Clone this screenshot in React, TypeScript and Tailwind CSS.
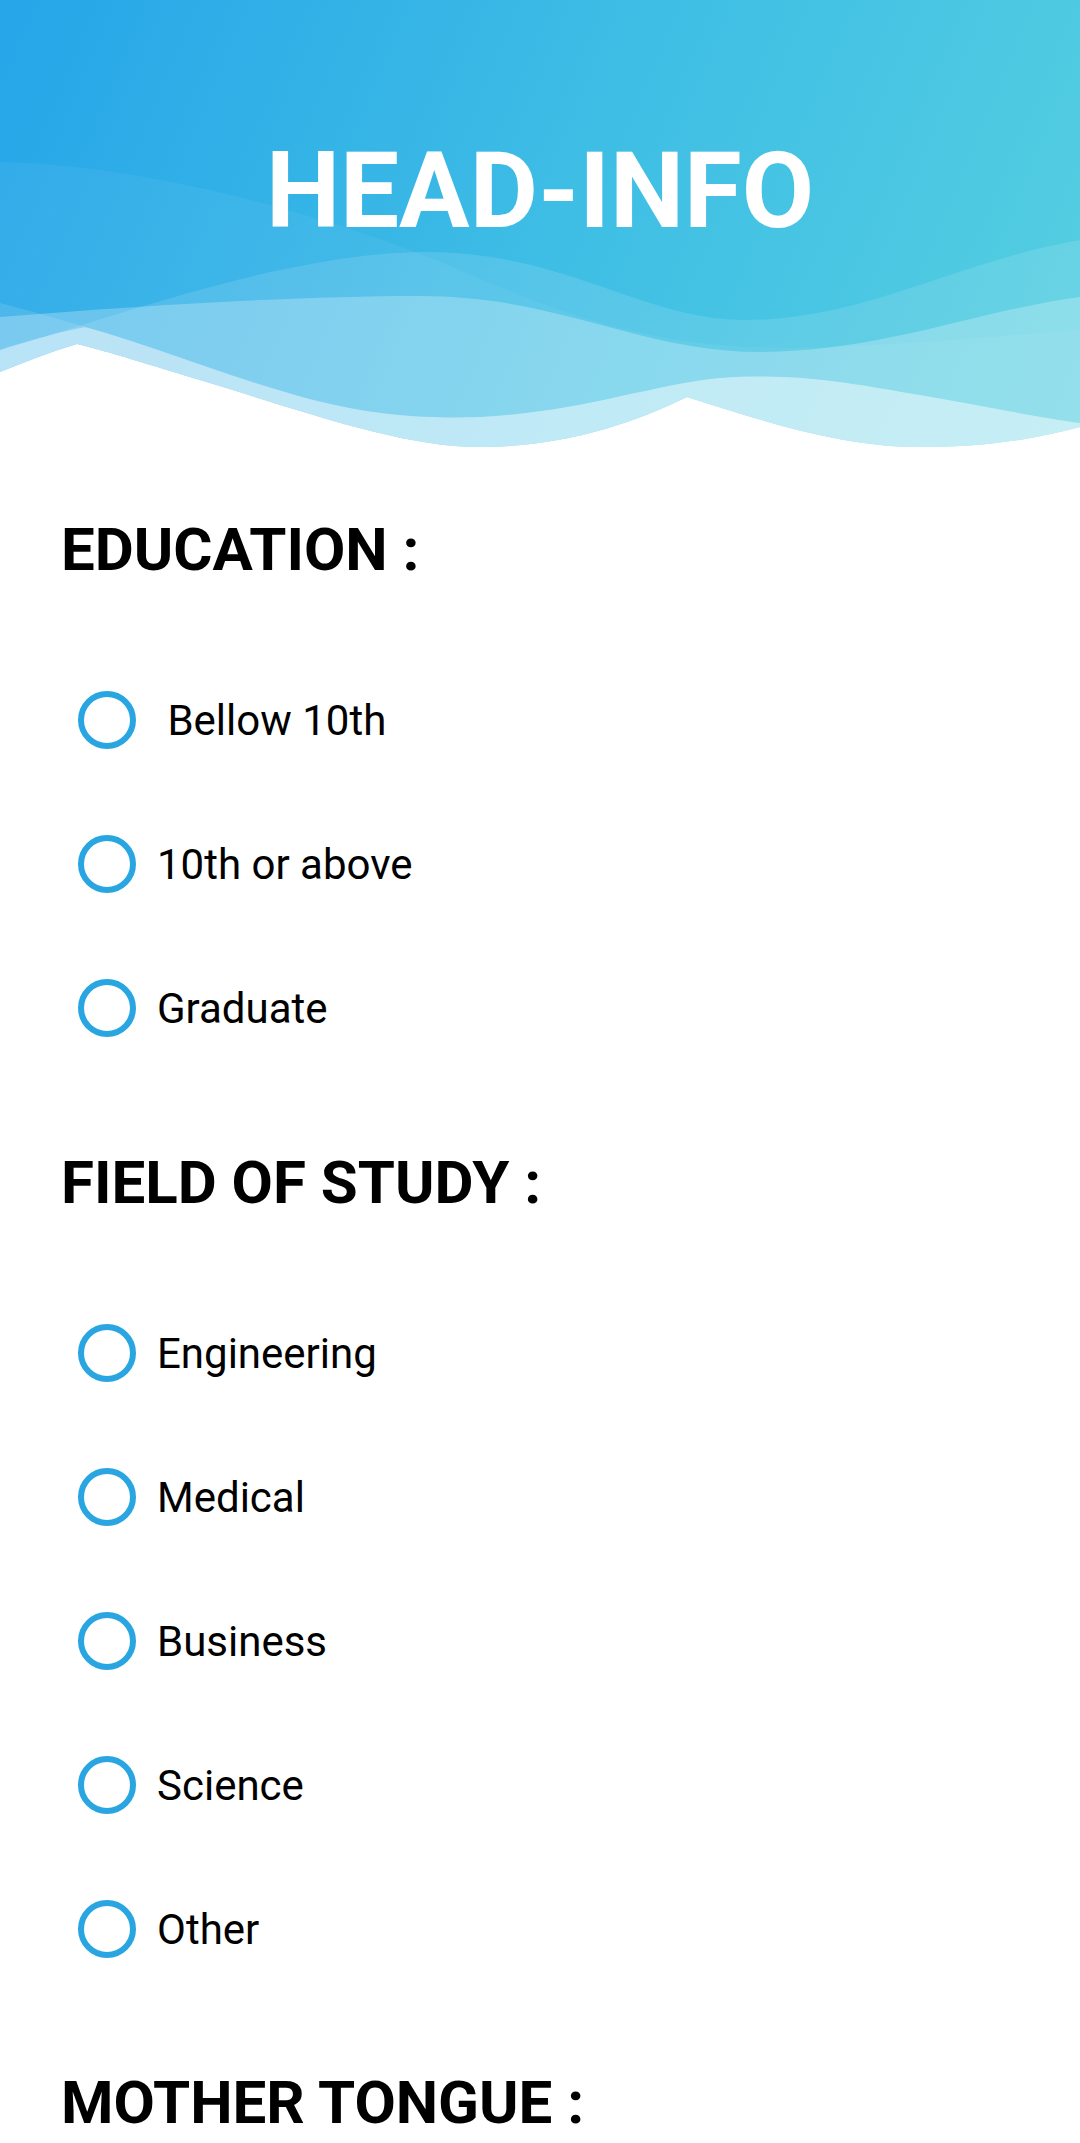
import React from "react";

const education = [" Bellow 10th", "10th or above", "Graduate"];
const fields = ["Engineering", "Medical", "Business", "Science", "Other"];

// lower edge of the light ribbons, shared by two layers after the crossing
const tail =
  "C170,350 270,395 360,410 C410,418 450,418 480,417 C580,412 650,385 720,378 C800,372 860,385 920,395 C980,405 1040,418 1080,423 V460 H0 Z";

const Waves = () => (
  <svg
    className="absolute inset-0"
    width="1080"
    height="460"
    viewBox="0 0 1080 460"
    preserveAspectRatio="none"
  >
    <defs>
      <linearGradient id="hdr" x1="0" y1="0" x2="1080" y2="450" gradientUnits="userSpaceOnUse">
        <stop offset="0" stopColor="#26a5e9" />
        <stop offset="0.55" stopColor="#40bfe5" />
        <stop offset="1" stopColor="#55cfe0" />
      </linearGradient>
      <clipPath id="shape">
        <path d="M0,0 H1080 V427 C1030,440 985,447 920,447 C840,447 760,420 687,397 C630,425 560,447 480,447 C400,447 300,410 200,380 C150,365 110,352 77,344 C50,352 25,362 0,372 Z" />
      </clipPath>
    </defs>
    <g clipPath="url(#shape)">
      <rect x="0" y="0" width="1080" height="460" fill="url(#hdr)" />
      <path
        d="M0,162 C150,165 330,215 460,270 C560,315 640,338 720,345 C800,352 900,345 1080,330 V460 H0 Z"
        fill="#ffffff"
        fillOpacity="0.05"
      />
      <path
        d="M0,350 C120,315 280,255 420,252 C560,250 640,318 740,320 C860,322 960,260 1080,240 V460 H0 Z"
        fill="#ffffff"
        fillOpacity="0.12"
      />
      <path d={"M0,303 C30,311 60,319 85,327 " + tail} fill="#ffffff" fillOpacity="0.12" />
      <path
        d="M0,317 C150,305 300,296 420,296 C560,296 640,352 760,352 C880,352 980,310 1080,297 V460 H0 Z"
        fill="#ffffff"
        fillOpacity="0.25"
      />
      <path d={"M0,350 C30,340 60,332 85,327 " + tail} fill="#ffffff" fillOpacity="0.4" />
    </g>
  </svg>
);

const Radio = ({ label }: { label: string }) => (
  <label className="flex h-[144px] items-center pl-[78px]">
    <span className="h-[58px] w-[58px] shrink-0 rounded-full border-[6px] border-[#29a5e2]" />
    <span className="ml-[21px] whitespace-pre text-[42px] text-black">{label}</span>
  </label>
);

const Heading = ({ children }: { children: React.ReactNode }) => (
  <h2 className="pl-[61px] text-[60px] font-bold leading-none text-black">{children}</h2>
);

export default function App() {
  return (
    <div className="min-h-[2143px] w-[1080px] bg-white font-['Roboto',sans-serif]">
      <header className="relative h-[460px] overflow-hidden">
        <Waves />
        <h1 className="relative pt-[139px] text-center text-[105px] font-bold leading-none text-white">
          HEAD-INFO
        </h1>
      </header>

      <section className="mt-[60px]">
        <Heading>EDUCATION :</Heading>
        <div className="mt-[68px]">
          {education.map((e) => (
            <Radio key={e} label={e} />
          ))}
        </div>
      </section>

      <section className="mt-[73px]">
        <Heading>FIELD OF STUDY :</Heading>
        <div className="mt-[68px]">
          {fields.map((f) => (
            <Radio key={f} label={f} />
          ))}
        </div>
      </section>

      <section className="mt-[72px]">
        <Heading>MOTHER TONGUE :</Heading>
      </section>
    </div>
  );
}
